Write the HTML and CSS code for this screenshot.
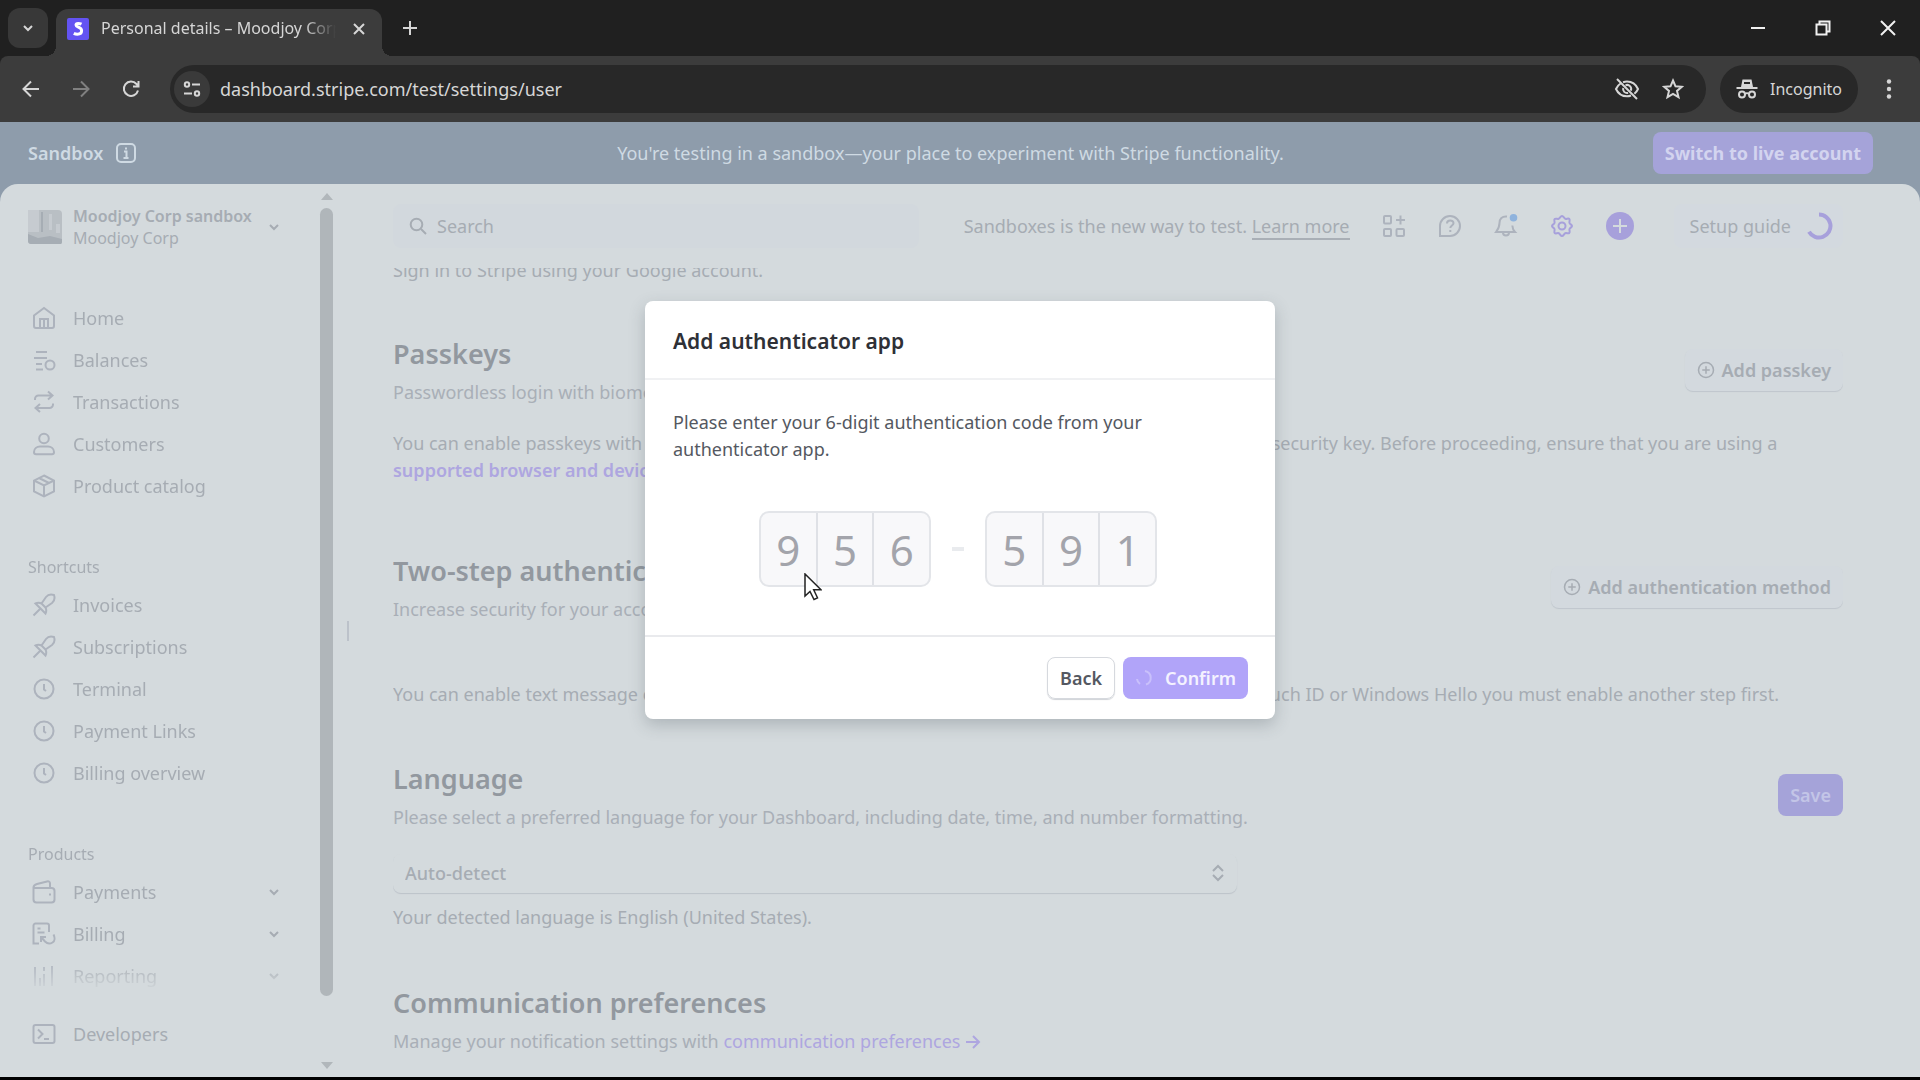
FILE: index.html
```html
<!DOCTYPE html>
<html lang="en">
<head>
<meta charset="utf-8">
<meta name="viewport" content="width=device-width, initial-scale=1">
<title>Personal details – Moodjoy Corp</title>
<link rel="stylesheet" href="styles.css">
</head>
<body>
<svg class="defs" aria-hidden="true">
  <symbol id="chev" viewBox="0 0 12 12"><path d="M2 4l4 4 4-4"/></symbol>
  <symbol id="pin" viewBox="0 0 24 24"><path d="M1.500 22.500L8 16M3.500 10.500c2-1 4-1 6 0L14 4c2-2.500 5-3 8-2 1 3 .5 6-2 8l-6.500 4.500c1 2 1 4 0 6zM9.500 10.500l4 4"/></symbol>
  <symbol id="clock" viewBox="0 0 24 24"><circle cx="12" cy="12" r="9.500"/><path d="M12 7v5.500l2 1.500"/></symbol>
  <symbol id="addc" viewBox="0 0 24 24"><circle cx="12" cy="12" r="10"/><path d="M12 7v10M7 12h10"/></symbol>
</svg>

<header class="browser">
  <div class="tabstrip">
    <button class="tab-search" aria-label="Search tabs"><svg class="i12"><use href="#chev"/></svg></button>
    <div class="tab">
      <svg class="favicon" viewBox="0 0 22 22"><rect width="22" height="22" rx="2" fill="#6353f2" stroke="none"/><path d="M14.500 6.200c-1.200-.6-2.300-.8-3.300-.8-1.400 0-2.200.6-2.200 1.500 0 2.600 5.600 2 5.600 5.700 0 2.400-1.900 3.700-4.200 3.700-1.300 0-2.500-.3-3.600-.9" stroke="#fff" stroke-width="3"/></svg>
      <span class="tab-title">Personal details – Moodjoy Corp</span>
      <button class="plain" aria-label="Close tab"><svg class="i14" viewBox="0 0 14 14"><path d="M2 2l10 10M12 2L2 12"/></svg></button>
    </div>
    <button class="plain newtab" aria-label="New tab"><svg class="i16" viewBox="0 0 16 16"><path d="M8 1v14M1 8h14"/></svg></button>
    <div class="winctl">
      <button class="plain" aria-label="Minimize"><svg class="i16" viewBox="0 0 16 16"><path d="M1 8h14"/></svg></button>
      <button class="plain" aria-label="Restore"><svg class="i16" viewBox="0 0 16 16"><path d="M1.500 4.500h10v10h-10zM4.500 4V1.500h10v10H12"/></svg></button>
      <button class="plain" aria-label="Close"><svg class="i16" viewBox="0 0 16 16"><path d="M1 1l14 14M15 1L1 15"/></svg></button>
    </div>
  </div>
  <div class="toolbar">
    <button class="plain" aria-label="Back"><svg class="i18" viewBox="0 0 18 18"><path d="M17 9H2M9 1.500L1.500 9 9 16.500"/></svg></button>
    <button class="plain dim" aria-label="Forward"><svg class="i18" viewBox="0 0 18 18"><path d="M1 9h15M9 1.500L16.500 9 9 16.500"/></svg></button>
    <button class="plain" aria-label="Reload"><svg class="i18" viewBox="0 0 18 18"><path d="M16 10.500A7.200 7.200 0 1 1 14.500 4L16 6M16.500 1v5.500H11"/></svg></button>
    <div class="omnibox">
      <button class="site" aria-label="Site information"><svg class="i18" viewBox="0 0 18 18"><circle cx="4" cy="4.500" r="2.200"/><path d="M9 4.500h8M1 13.500h8"/><circle cx="14" cy="13.500" r="2.200"/></svg></button>
      <input class="url" aria-label="Address" value="dashboard.stripe.com/test/settings/user">
      <button class="plain" aria-label="Third-party cookies blocked"><svg class="i26" viewBox="0 0 26 26"><path d="M9 6.200c1.200-.4 2.600-.7 4-.7 5 0 9 3 11 7.500-.9 2-2 3.500-3.600 4.800M17 19.500c-1.200.5-2.600.8-4 .8-5 0-9-3-11-7.300 1-2.300 2.500-4.200 4.500-5.500M11.500 9.300a4 4 0 0 1 5.300 5.300M9.200 12a4 4 0 0 0 4.900 4.900M3 3l20 20"/></svg></button>
      <button class="plain" aria-label="Bookmark"><svg class="i22" viewBox="0 0 22 22"><path d="M11 2.500l2.500 5.800 6.300.5-4.800 4.100 1.500 6.200-5.500-3.300-5.500 3.300L7 12.900 2.200 8.800l6.300-.5z"/></svg></button>
    </div>
    <button class="incog"><svg class="i22" viewBox="0 0 22 22"><path d="M5 9l1.500-7.500h9L17 9z" fill="currentColor" stroke="none"/><path d="M8 5h6" stroke="#282828"/><path d="M.5 10h21"/><circle cx="6" cy="16.500" r="3"/><circle cx="16" cy="16.500" r="3"/><path d="M9 16c1-1 3-1 4 0"/></svg>Incognito</button>
    <button class="plain" aria-label="Menu"><svg class="i22" viewBox="0 0 22 22"><g fill="currentColor" stroke="none"><circle cx="11" cy="3.500" r="2.200"/><circle cx="11" cy="11" r="2.200"/><circle cx="11" cy="18.500" r="2.200"/></g></svg></button>
  </div>
</header>

<div class="page">
  <div class="banner">
    <div class="banner-name">Sandbox <svg class="i22" viewBox="0 0 22 22"><rect x="2" y="2" width="18" height="18" rx="4"/><path d="M9 9.500h2.500V16M8.500 16h5M11 5.500v2"/></svg></div>
    <p>You're testing in a sandbox—your place to experiment with Stripe functionality.</p>
    <button class="live">Switch to live account</button>
  </div>

  <div class="app">
    <aside class="sidebar">
      <button class="account">
        <svg class="logo" viewBox="0 0 34 34"><rect width="34" height="34" rx="4" fill="#b9bfc4"/><path d="M0 0h11v22H0zM21 4h3v16h-3zM28 14h4v9h-4z" fill="#c6cbd0"/><path d="M13 2h2v20h-2zM0 24l10 4 12-2 12 3v3c0 2-1 2-2 2H3c-2 0-3-1-3-3z" fill="#a6adb4"/></svg>
        <span class="account-text"><strong>Moodjoy Corp sandbox</strong><span>Moodjoy Corp</span></span>
        <svg class="i12"><use href="#chev"/></svg>
      </button>
      <nav class="nav">
        <a href="#"><svg class="i24" viewBox="0 0 24 24"><path d="M2 9.500L12 2l10 7.500V20a2 2 0 0 1-2 2H4a2 2 0 0 1-2-2zM8 22v-9h8v9M12 13v9"/></svg>Home</a>
        <a href="#"><svg class="i24" viewBox="0 0 24 24"><path d="M4 4h11M2 10h13M4 16h6M4 21.500h7"/><circle cx="18" cy="17" r="4.500"/></svg>Balances</a>
        <a href="#"><svg class="i24" viewBox="0 0 24 24"><path d="M3 10V9a3.500 3.500 0 0 1 3.500-3.500H20M16 1.500l4.500 4-4.500 4M21 13.500v1a3.500 3.500 0 0 1-3.500 3.500H4M8 14l-4.500 4L8 22"/></svg>Transactions</a>
        <a href="#"><svg class="i24" viewBox="0 0 24 24"><circle cx="12" cy="6.500" r="4.800"/><path d="M2 20c0-3.500 3-5.500 6-5.500h8c3 0 6 2 6 5.500 0 1.500-1 2.300-2 2.300H4c-1 0-2-.8-2-2.300z"/></svg>Customers</a>
        <a href="#"><svg class="i24" viewBox="0 0 24 24"><path d="M12 1.500l10 5v11l-10 5-10-5v-11zM2 6.500l10 5 10-5M12 11.500v11M7 4l10 5"/></svg>Product catalog</a>
        <h2>Shortcuts</h2>
        <a href="#"><svg class="i24"><use href="#pin"/></svg>Invoices</a>
        <a href="#"><svg class="i24"><use href="#pin"/></svg>Subscriptions</a>
        <a href="#"><svg class="i24"><use href="#clock"/></svg>Terminal</a>
        <a href="#"><svg class="i24"><use href="#clock"/></svg>Payment Links</a>
        <a href="#"><svg class="i24"><use href="#clock"/></svg>Billing overview</a>
        <h2>Products</h2>
        <a href="#"><svg class="i24" viewBox="0 0 24 24"><path d="M1.500 8h18a3 3 0 0 1 3 3v8.500a3 3 0 0 1-3 3h-15a3 3 0 0 1-3-3V7.500C1.500 5 3 4.500 5 4l10-2.500c2-.5 3 .5 3 2V8"/><path d="M17 14.500h2"/></svg>Payments<svg class="i12 end"><use href="#chev"/></svg></a>
        <a href="#"><svg class="i24" viewBox="0 0 24 24"><path d="M7 21.500H1.500V3.500a2 2 0 0 1 2-2H15a2 2 0 0 1 2 2V10M5.500 6.500h3M5.500 10.500h7M9 20v-5h5M9.500 15.500l3.500 4c2 2 5 2.500 7.500 1s2.500-5 1-8"/></svg>Billing<svg class="i12 end"><use href="#chev"/></svg></a>
        <a href="#"><svg class="i24" viewBox="0 0 24 24"><path d="M3 3v19M12 10v12M12 7V3M20 2v20M8 14v8"/></svg>Reporting<svg class="i12 end"><use href="#chev"/></svg></a>
      </nav>
      <a class="dev" href="#"><svg class="i24" viewBox="0 0 24 24"><rect x="1.500" y="3" width="21" height="18" rx="2"/><path d="M6 7.500l4.500 4.500L6 16.500M12 17h5"/></svg>Developers</a>
    </aside>
    <div class="scrollbar" aria-hidden="true"><span class="arrow up"></span><span class="thumb"></span><span class="arrow down"></span></div>
    <div class="resizer" aria-hidden="true"></div>

    <main class="main">
      <div class="topbar">
        <label class="search"><svg class="i18" viewBox="0 0 18 18"><circle cx="7.500" cy="7.500" r="5.800"/><path d="M12 12l5 5"/></svg><input type="search" placeholder="Search" aria-label="Search"></label>
        <p class="hint">Sandboxes is the new way to test. <a href="#">Learn more</a></p>
        <div class="tools">
          <button class="plain" aria-label="Apps"><svg class="i24" viewBox="0 0 24 24"><rect x="2" y="2" width="7" height="7.500" rx="1"/><rect x="2" y="15" width="7" height="7" rx="1"/><rect x="14.500" y="15" width="7.500" height="7" rx="1"/><path d="M18.500 1.500v9M14 6h9"/></svg></button>
          <button class="plain" aria-label="Help"><svg class="i24" viewBox="0 0 24 24"><path d="M2 22V12A10 10 0 1 1 12 22z"/><path d="M9 9.500c0-4 6.500-4 6.500-.2 0 2.200-3.200 2.200-3.200 4.700M12.300 16v2"/></svg></button>
          <button class="plain" aria-label="Notifications"><svg class="i24" viewBox="0 0 24 24"><path d="M13 2.500C8 2 5.500 5 5.500 9c0 4-1.500 6.500-3.500 9h19c-2-2-2.500-4-2.700-6.500M9 18.500c0 4 6 4 6 0"/><circle cx="19.500" cy="3.800" r="3.800" fill="#8fb3dd" stroke="none"/></svg></button>
          <button class="plain violet" aria-label="Settings"><svg class="i24" viewBox="0 0 24 24"><path d="M12 2c1.500 0 2 2.300 3.300 2.800s3-.9 4 .2-.3 2.700.2 4 2.500 1.700 2.500 3-2 1.700-2.500 3 .9 3-.2 4-2.700-.3-4 .2S13.500 22 12 22s-2-2.300-3.300-2.800-3 .9-4-.2.300-2.700-.2-4S2 13.300 2 12s2-1.700 2.500-3-.9-3 .2-4 2.700.3 4-.2S10.500 2 12 2z"/><circle cx="12" cy="12" r="3.500"/></svg></button>
          <button class="plain" aria-label="Create"><svg class="i28" viewBox="0 0 28 28"><circle cx="14" cy="14" r="14" fill="#a7a0db" stroke="none"/><path d="M14 7v14M7 14h14" stroke="#d4dadd"/></svg></button>
        </div>
        <button class="setup">Setup guide <svg class="i28 violet" viewBox="0 0 28 28"><path d="M14 2.500a11.500 11.500 0 1 1-10 17.200" stroke-width="4"/></svg></button>
      </div>

      <div class="content">
        <p class="first">Sign in to Stripe using your Google account.</p>

        <section class="passkeys">
          <div class="head">
            <div><h1>Passkeys</h1><p class="sub">Passwordless login with biometrics or security keys.</p></div>
            <button class="ghost"><svg class="i18"><use href="#addc"/></svg>Add passkey</button>
          </div>
          <p class="body">You can enable passkeys with your device's fingerprint, facial recognition, screen lock, or with a physical security key. Before proceeding, ensure that you are using a <a class="strong" href="#">supported browser and device</a>.</p>
        </section>

        <section class="twostep">
          <div class="head">
            <div><h1>Two-step authentication</h1><p class="sub">Increase security for your account by using multiple methods.</p></div>
            <button class="ghost"><svg class="i18"><use href="#addc"/></svg>Add authentication method</button>
          </div>
          <p class="body">You can enable text message or authenticator app as a second step to log in to Stripe. To use the key, Touch ID or Windows Hello you must enable another step first.</p>
        </section>

        <section class="language">
          <div class="head">
            <div><h1>Language</h1><p class="sub">Please select a preferred language for your Dashboard, including date, time, and number formatting.</p></div>
            <button class="save">Save</button>
          </div>
          <div class="select">
            <select aria-label="Language"><option>Auto-detect</option></select>
            <svg class="i18" viewBox="0 0 18 18"><path d="M4 7l5-5 5 5M4 11l5 5 5-5"/></svg>
          </div>
          <p class="note">Your detected language is English (United States).</p>
        </section>

        <section class="comms">
          <h1>Communication preferences</h1>
          <p class="sub">Manage your notification settings with <a href="#">communication preferences <svg class="i16" viewBox="0 0 16 16"><path d="M1 8h13M8 2l6 6-6 6"/></svg></a></p>
        </section>
      </div>
    </main>
  </div>

  <div class="overlay">
    <form class="modal" role="dialog" aria-labelledby="dlg">
      <h2 class="modal-head" id="dlg">Add authenticator app</h2>
      <div class="modal-body">
        <p>Please enter your 6-digit authentication code from your authenticator app.</p>
        <div class="code">
          <div class="group">
            <input aria-label="Digit 1" maxlength="1" value="9"><input aria-label="Digit 2" maxlength="1" value="5"><input aria-label="Digit 3" maxlength="1" value="6">
          </div>
          <span class="dash"></span>
          <div class="group">
            <input aria-label="Digit 4" maxlength="1" value="5"><input aria-label="Digit 5" maxlength="1" value="9"><input aria-label="Digit 6" maxlength="1" value="1">
          </div>
          <svg class="cursor" viewBox="0 0 18 28"><path d="M1 1v22l5-4.500 4 8 3.500-1.700-3.800-8H17z" fill="#fff" stroke="#222" stroke-width="1.500"/></svg>
        </div>
      </div>
      <div class="modal-foot">
        <button type="button" class="back">Back</button>
        <button type="button" class="confirm"><svg class="i18" viewBox="0 0 18 18"><path d="M10 2a7 7 0 0 1 1 13.500M5 15a7 7 0 0 1-3-5"/></svg>Confirm</button>
      </div>
    </form>
  </div>
</div>
</body>
</html>
```
FILE: styles.css
```css
* { box-sizing: border-box; }
body {
  margin: 0;
  height: 100vh;
  padding-bottom: 3px;
  display: flex;
  flex-direction: column;
  overflow: hidden;
  background: #000;
  color: #a6acb3;
  font: 18px/27px "Noto Sans", "Open Sans", sans-serif;
}
h1, h2, p { margin: 0; }
button, input, select { font: inherit; color: inherit; border: 0; background: none; padding: 0; margin: 0; outline: 0; }
button { display: flex; align-items: center; white-space: nowrap; }
a { color: inherit; text-decoration: none; }
svg { fill: none; stroke: currentColor; stroke-width: 2; flex: none; }
.defs { position: absolute; width: 0; height: 0; }
.i12 { width: 12px; height: 12px; }
.i14 { width: 14px; height: 14px; }
.i16 { width: 16px; height: 16px; }
.i18 { width: 18px; height: 18px; }
.i22 { width: 22px; height: 22px; }
.i24 { width: 24px; height: 24px; }
.i26 { width: 26px; height: 26px; }
.i28 { width: 28px; height: 28px; }
.plain { justify-content: center; }

/* Browser window */
.browser { flex: none; background: #202020; color: #d6d6d6; }
.tabstrip { display: flex; height: 56px; padding-left: 8px; }
.tab-search { width: 40px; height: 40px; margin: 8px 8px 0 0; justify-content: center; border-radius: 12px; background: #383838; }
.tab { position: relative; display: flex; align-items: center; width: 326px; height: 47px; margin-top: 9px; padding: 0 16px 8px 11px; border-radius: 12px 12px 0 0; background: #3c3c3c; }
.tab::before, .tab::after { content: ""; position: absolute; bottom: 0; width: 10px; height: 10px; }
.tab::before { left: -10px; background: radial-gradient(circle at 0 0, transparent 10px, #3c3c3c 10px); }
.tab::after { right: -10px; background: radial-gradient(circle at 100% 0, transparent 10px, #3c3c3c 10px); }
.favicon { width: 22px; height: 22px; }
.tab-title { flex: 1; margin: 0 16px 0 12px; overflow: hidden; white-space: nowrap; font-size: 16px; mask-image: linear-gradient(to left, transparent, #000 32px); }
.newtab { width: 56px; }
.winctl { display: flex; margin-left: auto; }
.winctl button { width: 65px; color: #f0f0f0; }
.toolbar { display: flex; align-items: center; height: 66px; padding: 0 16px 0 6px; border-radius: 8px 8px 0 0; background: #3c3c3c; }
.toolbar > .plain { width: 50px; height: 40px; }
.toolbar > .plain:last-child { width: 30px; margin-left: 16px; }
.toolbar > .dim { color: #808080; }
.omnibox { flex: 1; display: flex; align-items: center; gap: 22px; height: 48px; margin: 0 14px; padding: 0 22px 0 4px; border-radius: 24px; background: #282828; }
.site { width: 36px; height: 36px; justify-content: center; border-radius: 18px; background: #3a3a3a; }
.url { flex: 1; margin-left: -12px; }
.incog { gap: 12px; height: 48px; padding: 0 16px; border-radius: 24px; background: #282828; font-size: 16px; }

/* Sandbox banner */
.page { position: relative; flex: 1; min-height: 0; display: flex; flex-direction: column; background: #8e9cab; }
.banner { flex: none; display: grid; grid-template-columns: 1fr auto 1fr; align-items: center; height: 62px; padding: 0 47px 0 28px; color: #cfdae3; }
.banner-name { display: flex; align-items: center; gap: 12px; font-weight: 600; }
.live { justify-self: end; height: 42px; padding: 0 12px; border-radius: 8px; background: #a5a3d9; color: #d3d4ef; font-weight: 700; }
.app { flex: 1; min-height: 0; display: flex; border-radius: 18px 18px 0 0; background: #d4dadd; }

/* Sidebar */
.sidebar { flex: none; display: flex; flex-direction: column; width: 320px; padding: 21px 40px 22px 28px; }
.account { flex: none; height: 44px; text-align: left; }
.logo { width: 34px; height: 34px; stroke: none; }
.account-text { flex: 1; display: flex; flex-direction: column; margin-left: 11px; font-size: 16px; line-height: 22px; }
.account-text strong { font-weight: 600; }
.nav { flex: 1; min-height: 0; overflow: hidden; padding-top: 48px; mask-image: linear-gradient(to top, transparent 20px, #000 54px); }
.nav a, .dev { display: flex; align-items: center; gap: 17px; height: 42px; padding-left: 4px; }
.sidebar .i24, .tools .i24 { color: #adb3bd; }
.tools .violet .i24 { color: #a7a0db; }
.end { margin-left: auto; }
.nav h2 { margin: 44px 0 0; font-size: 16px; line-height: 32px; height: 33px; font-weight: 400; }
.scrollbar { flex: none; width: 13px; display: flex; flex-direction: column; align-items: center; gap: 8px; padding: 9px 0 8px; }
.arrow { border: 6px solid transparent; }
.up { border-top: 0; border-bottom: 7px solid #b1b7bb; }
.down { border-bottom: 0; border-top: 7px solid #b1b7bb; margin-top: auto; }
.thumb { width: 13px; height: 90%; border-radius: 7px; background: #b0b6ba; }
.resizer { flex: none; align-self: center; width: 2px; height: 20px; margin: 0 0 0 14px; background: #bcc2ca; }

/* Account settings */
.main { flex: 1; min-width: 0; display: flex; flex-direction: column; padding: 0 77px 0 44px; }
.topbar { flex: none; display: flex; align-items: center; height: 84px; }
.search { display: flex; align-items: center; gap: 10px; width: 526px; height: 44px; padding-left: 16px; border-radius: 8px; background: #d2d8dd; }
.search input { flex: 1; min-width: 0; }
.search input::placeholder { color: inherit; opacity: 1; }
.hint { margin-left: auto; white-space: nowrap; }
.hint a { border-bottom: 2px solid #a9afb6; }
.tools { display: flex; gap: 32px; margin: 0 40px 0 32px; }
.violet { color: #a7a0db; }
.setup { gap: 14px; height: 44px; padding: 0 10px 0 16px; border-radius: 8px; background: #d3d9df; }
.content { flex: 1; min-height: 0; overflow: hidden; }
.first { margin: -11px 0 53px; }
.head { display: flex; justify-content: space-between; align-items: flex-start; }
h1 { color: #92989f; font-size: 27px; line-height: 34px; font-weight: 600; }
.sub { margin-top: 8px; color: #a9afb7; }
.content a { color: #aea6e0; }
.content .strong { font-weight: 600; }
.ghost { gap: 7px; height: 42px; margin-top: 12px; padding: 0 12px; border-radius: 8px; background: #d3d9de; box-shadow: 0 1px 1px #bfc5cc; font-weight: 600; }
.passkeys .body { margin: 24px 0 70px; }
.twostep .body { margin: 58px 0 54px; }
.save { height: 42px; margin-top: 12px; padding: 0 12px; border-radius: 8px; background: #a5a3d9; color: #c3c5e7; font-weight: 600; }
.select { position: relative; width: 844px; margin: 23px 0 11px; }
.select select { display: block; width: 100%; height: 39px; padding: 0 12px; appearance: none; border-radius: 8px; box-shadow: 0 1px 1px #bcc2c9; font-weight: 500; }
.select svg { position: absolute; right: 10px; top: 10px; }
.note { margin-bottom: 55px; }
.comms a svg { vertical-align: -2px; }

/* Dialog */
.overlay { position: absolute; inset: 0; display: flex; justify-content: center; align-items: flex-start; padding-top: 179px; }
.modal { width: 630px; border-radius: 8px; background: #fff; box-shadow: 0 6px 16px rgba(60, 70, 80, .25); color: #545861; }
.modal-head { height: 79px; padding: 26px 28px; border-bottom: 2px solid #f0f1f3; color: #2e3036; font-size: 21px; line-height: 28px; font-weight: 600; }
.modal-body { padding: 29px 28px 48px; }
.code { position: relative; display: flex; justify-content: center; align-items: center; margin-top: 48px; padding-right: 4px; }
.group { display: flex; width: 172px; height: 76px; border: 2px solid #e3e5e9; border-radius: 10px; overflow: hidden; background: #f8f8fa; }
.group input { flex: 1; width: 0; text-align: center; font-size: 42px; color: #a3a4ab; }
.group input + input { border-left: 2px solid #dfe1e6; }
.dash { width: 12px; height: 4px; margin: 0 21px; background: #e9ebee; }
.cursor { position: absolute; left: 131px; top: 62px; width: 18px; height: 28px; }
.modal-foot { display: flex; justify-content: flex-end; gap: 8px; padding: 20px 27px; border-top: 2px solid #e9eaed; font-weight: 600; }
.modal-foot button { height: 42px; border-radius: 8px; padding: 0 12px; }
.back { border: 1px solid #d6d9de; box-shadow: 0 1px 1px #d0d3d8; }
.confirm { gap: 12px; background: #b1a4f9; color: #f4f2ff; }
.confirm svg { color: #c9c0fb; }
```
